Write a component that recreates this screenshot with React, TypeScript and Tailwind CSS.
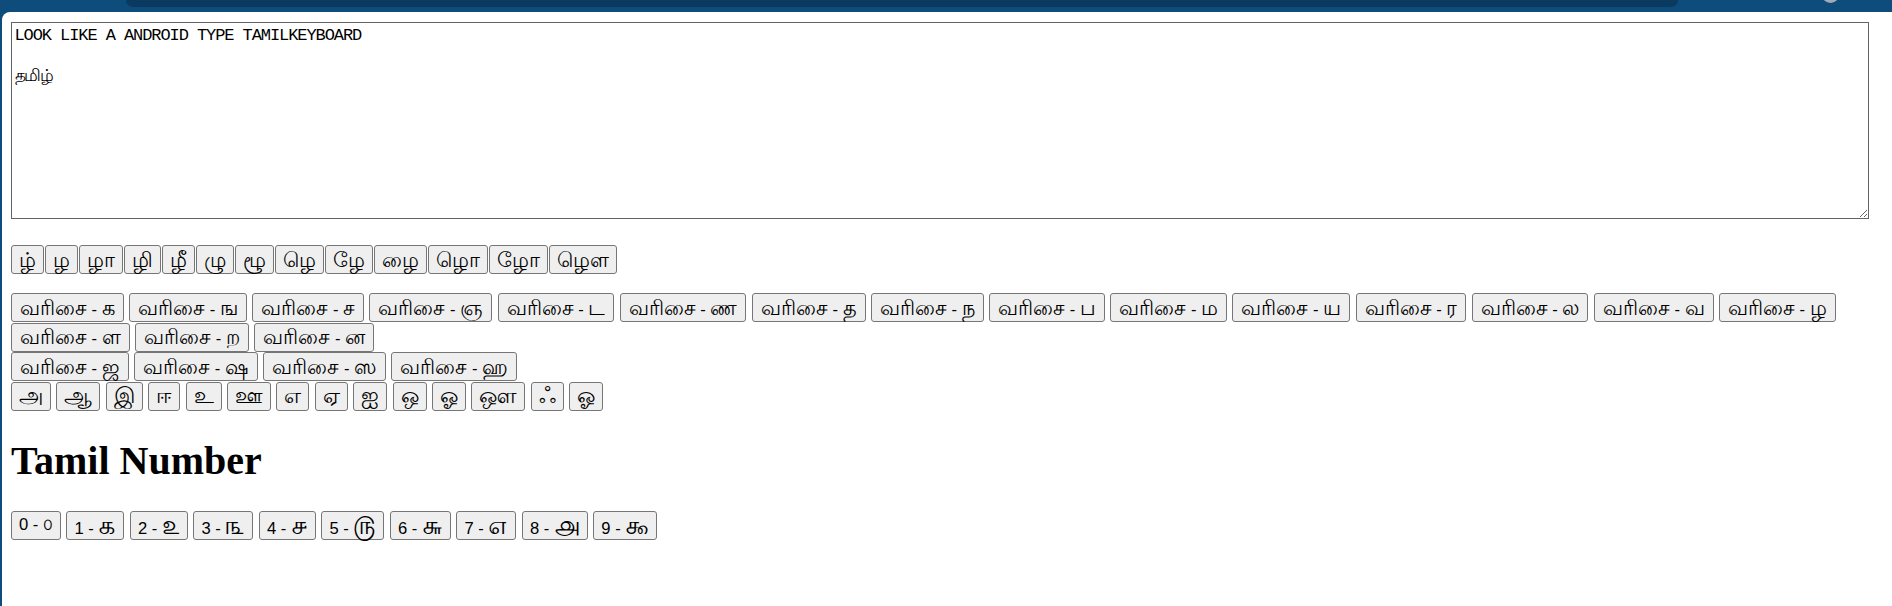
import React from 'react';

const zhaRow = ['ழ்', 'ழ', 'ழா', 'ழி', 'ழீ', 'ழு', 'ழூ', 'ழெ', 'ழே', 'ழை', 'ழொ', 'ழோ', 'ழௌ'];

const varisaiLines = [
  ['க', 'ங', 'ச', 'ஞ', 'ட', 'ண', 'த', 'ந', 'ப', 'ம', 'ய', 'ர', 'ல', 'வ', 'ழ'],
  ['ள', 'ற', 'ன'],
  ['ஜ', 'ஷ', 'ஸ', 'ஹ'],
];

const vowels = ['அ', 'ஆ', 'இ', 'ஈ', 'உ', 'ஊ', 'எ', 'ஏ', 'ஐ', 'ஒ', 'ஓ', 'ஔ', 'ஃ', 'ஓ'];

const tamilDigits = ['௦', '௧', '௨', '௩', '௪', '௫', '௬', '௭', '௮', '௯'];

function Key({ children, wide }: { children: React.ReactNode; wide?: boolean }) {
  return (
    <button
      className={`h-[29px] ${wide ? 'px-[8px]' : 'px-[7px]'} flex items-center justify-center bg-[#efefef] border border-[#767676] rounded-[3px] text-[16.6px] leading-none text-black font-['Liberation_Sans',Arial,sans-serif]`}
    >
      <span className="whitespace-pre">{children}</span>
    </button>
  );
}

export default function App() {
  return (
    <div className="w-full h-[606px] bg-[#0e4c7c] overflow-hidden flex flex-col">
      {/* top frame */}
      <div className="h-[12px] relative shrink-0">
        <div className="absolute left-[126px] top-0 w-[1552px] h-[7px] bg-[#0a3a60] rounded-b-[12px]" />
        <div className="absolute left-[1822px] top-[-14px] w-[17px] h-[17px] rounded-full bg-[#a3acb5]" />
      </div>

      <div className="ml-[2px] flex-1 bg-white rounded-tl-[8px] pl-[9px] pt-[10px]">
        <textarea
          defaultValue={'LOOK LIKE A ANDROID TYPE TAMILKEYBOARD\n\nதமிழ்'}
          className="block w-[1858px] h-[197px] border border-[#636363] p-[2.5px] text-[17px] tracking-[-1.08px] leading-[20.5px] text-black font-['Liberation_Mono',monospace] outline-none"
        />

        {/* fallback Tamil face is smaller than the original one, so Tamil runs are sized up */}
        <div className="mt-[26px] flex gap-[1px]">
          {zhaRow.map((k, i) => (
            <Key key={i}>
              <span className="text-[21px]">{k}</span>
            </Key>
          ))}
        </div>

        <div className="mt-[19px] flex flex-col gap-[0.7px]">
          {varisaiLines.map((line, li) => (
            <div key={li} className="flex gap-[5.4px]">
              {line.map((k, i) => (
                <Key key={i} wide>
                  <span className="text-[21.2px]">வரிசை</span>
                  {' - '}
                  <span className="text-[21.2px]">{k}</span>
                </Key>
              ))}
            </div>
          ))}
          <div className="flex gap-[5.4px]">
            {vowels.map((k, i) => (
              <Key key={i}>
                <span className="text-[21.5px]">{k}</span>
              </Key>
            ))}
          </div>
        </div>

        <h1 className="mt-[27px] text-[40px] leading-[46px] font-bold text-black font-['Liberation_Serif','Times_New_Roman',serif]">
          Tamil Number
        </h1>

        <div className="mt-[27px] flex gap-[5.5px]">
          {tamilDigits.map((d, i) => (
            <Key key={i}>
              {`${i} - `}
              <span className={i === 0 ? 'text-[16.6px]' : 'text-[25.5px]'}>{d}</span>
            </Key>
          ))}
        </div>
      </div>
    </div>
  );
}
